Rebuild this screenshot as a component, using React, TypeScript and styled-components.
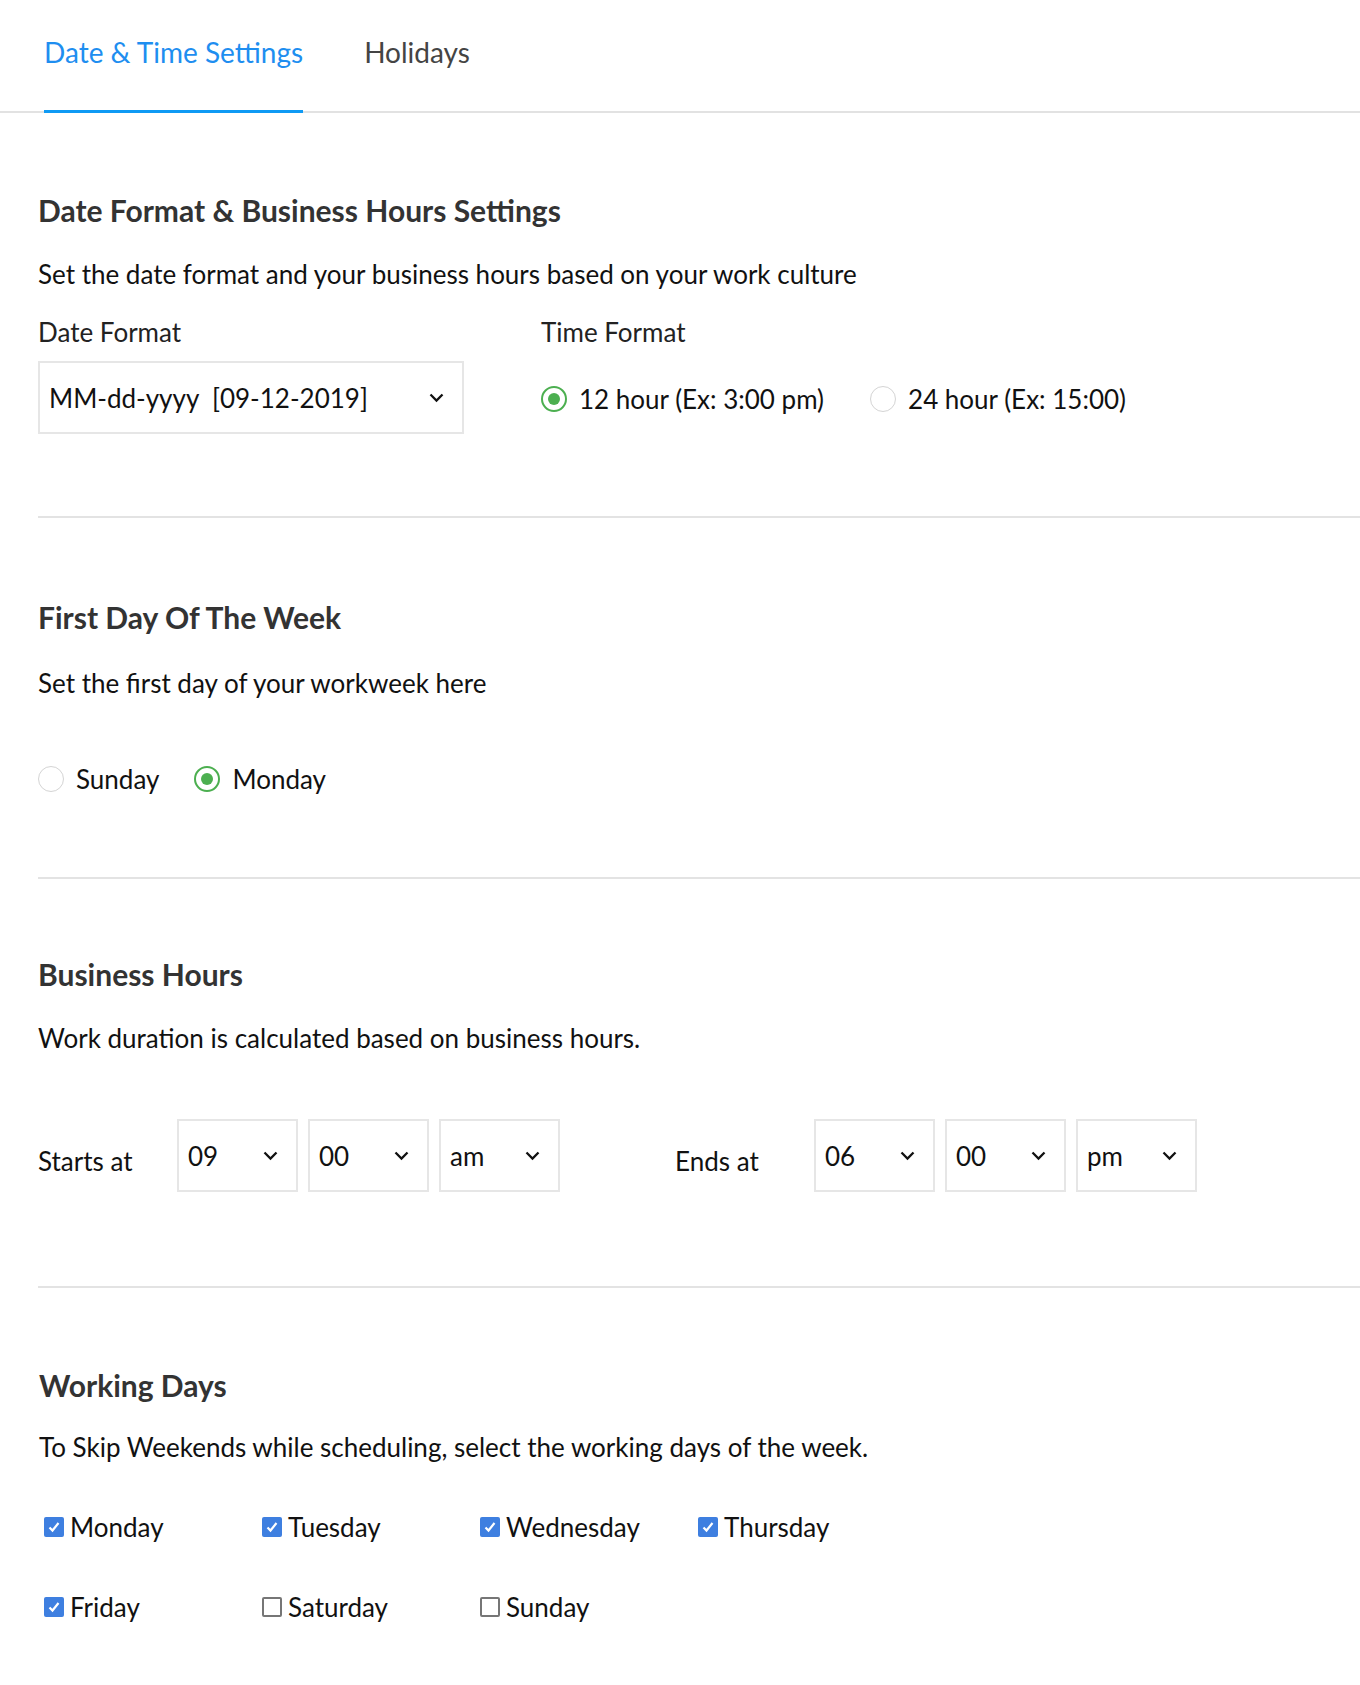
import React from "react";
import styled, { createGlobalStyle } from "styled-components";

const Global = createGlobalStyle`
  html, body { margin: 0; padding: 0; background: #fff; }
  body { font-family: Lato, "Open Sans", sans-serif; color: #111; }
  * { box-sizing: border-box; }
`;

const Page = styled.div`
  width: 1360px;
  min-height: 1685px;
  background: #fff;
`;

const TabBar = styled.div`
  display: flex;
  gap: 61px;
  padding-left: 44px;
  border-bottom: 2px solid #e2e2e2;
  height: 113px;
`;

const Tab = styled.div<{ $active?: boolean }>`
  font-size: 28px;
  line-height: 34px;
  padding-top: 35px;
  color: ${(p) => (p.$active ? "#1e8ef0" : "#444")};
  border-bottom: 3px solid ${(p) => (p.$active ? "#0f9af4" : "transparent")};
  margin-bottom: -2px;
  height: 113px;
`;

const Content = styled.div`
  padding-left: 38px;
`;

const Section = styled.section<{ $top: number; $bottom: number; $last?: boolean }>`
  padding-top: ${(p) => p.$top}px;
  padding-bottom: ${(p) => p.$bottom}px;
  border-bottom: ${(p) => (p.$last ? "none" : "2px solid #e3e3e3")};
`;

const Heading = styled.h2<{ $indent?: number }>`
  margin: 0;
  font-size: 30px;
  line-height: 36px;
  font-weight: 700;
  color: #333;
  padding-left: ${(p) => p.$indent || 0}px;
`;

const Desc = styled.p<{ $gap: number; $indent?: number }>`
  margin: ${(p) => p.$gap}px 0 0;
  font-size: 26px;
  line-height: 32px;
  color: #111;
  padding-left: ${(p) => p.$indent || 0}px;
`;

const FormatRow = styled.div`
  display: flex;
  gap: 77px;
  margin-top: 26px;
`;

const Field = styled.div`
  display: flex;
  flex-direction: column;
  gap: 13px;
`;

const Label = styled.div`
  font-size: 26px;
  line-height: 32px;
  color: #222;
`;

const SelectBox = styled.div<{ $w: number }>`
  width: ${(p) => p.$w}px;
  height: 73px;
  border: 2px solid #e6e6e6;
  display: flex;
  align-items: center;
  justify-content: space-between;
  padding: 0 18px 0 9px;
  font-size: 26px;
  color: #111;
  white-space: pre;
`;

const RadioGroup = styled.div<{ $gap: number; $top: number }>`
  display: flex;
  align-items: center;
  gap: ${(p) => p.$gap}px;
  margin-top: ${(p) => p.$top}px;
`;

const RadioItem = styled.label`
  display: flex;
  align-items: center;
  gap: 12px;
  font-size: 26px;
  line-height: 32px;
  color: #111;
`;

const RadioCircle = styled.span<{ $on?: boolean }>`
  width: 26px;
  height: 26px;
  border-radius: 50%;
  border: ${(p) => (p.$on ? "2px solid #4caf50" : "1.5px solid #d4d4d4")};
  display: flex;
  align-items: center;
  justify-content: center;
  &::after {
    content: "";
    width: 12px;
    height: 12px;
    border-radius: 50%;
    background: ${(p) => (p.$on ? "#4caf50" : "transparent")};
  }
`;

const TimeRow = styled.div`
  display: flex;
  align-items: center;
  margin-top: 65px;
`;

const TimeGroup = styled.div`
  display: flex;
  align-items: center;
  & + & {
    margin-left: 115px;
  }
`;

const TimeLabel = styled.div`
  width: 139px;
  font-size: 26px;
  line-height: 32px;
  color: #111;
  margin-top: 10px;
`;

const Selects = styled.div`
  display: flex;
  gap: 10px;
`;

const DaysGrid = styled.div`
  display: grid;
  grid-template-columns: repeat(4, 218px);
  row-gap: 48px;
  margin-top: 48px;
  padding-left: 6px;
`;

const DayItem = styled.label`
  display: flex;
  align-items: center;
  gap: 6px;
  font-size: 26px;
  line-height: 32px;
  color: #111;
`;

const Box = styled.span<{ $on?: boolean }>`
  width: 20px;
  height: 20px;
  border-radius: 2px;
  background: ${(p) => (p.$on ? "#3e7fe0" : "#fff")};
  border: ${(p) => (p.$on ? "none" : "2px solid #767676")};
  display: flex;
  align-items: center;
  justify-content: center;
`;

const Chevron = () => (
  <svg width="15" height="10" viewBox="0 0 15 10">
    <polyline points="1.5,1.5 7.5,7.5 13.5,1.5" fill="none" stroke="#111" strokeWidth="2.3" />
  </svg>
);

const Check = () => (
  <svg width="14" height="12" viewBox="0 0 14 12">
    <polyline points="2.5,6.5 5.5,9.5 11.5,2" fill="none" stroke="#fff" strokeWidth="2.2" />
  </svg>
);

const Select = ({ value, w }: { value: string; w: number }) => (
  <SelectBox $w={w}>
    <span>{value}</span>
    <Chevron />
  </SelectBox>
);

const Radio = ({ on, label }: { on?: boolean; label: string }) => (
  <RadioItem>
    <RadioCircle $on={on} />
    {label}
  </RadioItem>
);

const days: [string, boolean][] = [
  ["Monday", true],
  ["Tuesday", true],
  ["Wednesday", true],
  ["Thursday", true],
  ["Friday", true],
  ["Saturday", false],
  ["Sunday", false],
];

export default function App() {
  return (
    <Page>
      <Global />
      <TabBar>
        <Tab $active>Date &amp; Time Settings</Tab>
        <Tab>Holidays</Tab>
      </TabBar>
      <Content>
        <Section $top={79} $bottom={82}>
          <Heading>Date Format &amp; Business Hours Settings</Heading>
          <Desc $gap={30}>Set the date format and your business hours based on your work culture</Desc>
          <FormatRow>
            <Field>
              <Label>Date Format</Label>
              <Select value="MM-dd-yyyy  [09-12-2019]" w={426} />
            </Field>
            <Field>
              <Label>Time Format</Label>
              <RadioGroup $gap={46} $top={22}>
                <Radio on label="12 hour (Ex: 3:00 pm)" />
                <Radio label="24 hour (Ex: 15:00)" />
              </RadioGroup>
            </Field>
          </FormatRow>
        </Section>
        <Section $top={81} $bottom={82}>
          <Heading>First Day Of The Week</Heading>
          <Desc $gap={32}>Set the first day of your workweek here</Desc>
          <RadioGroup $gap={35} $top={64}>
            <Radio label="Sunday" />
            <Radio on label="Monday" />
          </RadioGroup>
        </Section>
        <Section $top={77} $bottom={94}>
          <Heading>Business Hours</Heading>
          <Desc $gap={30}>Work duration is calculated based on business hours.</Desc>
          <TimeRow>
            <TimeGroup>
              <TimeLabel>Starts at</TimeLabel>
              <Selects>
                <Select value="09" w={121} />
                <Select value="00" w={121} />
                <Select value="am" w={121} />
              </Selects>
            </TimeGroup>
            <TimeGroup>
              <TimeLabel>Ends at</TimeLabel>
              <Selects>
                <Select value="06" w={121} />
                <Select value="00" w={121} />
                <Select value="pm" w={121} />
              </Selects>
            </TimeGroup>
          </TimeRow>
        </Section>
        <Section $top={79} $bottom={60} $last>
          <Heading $indent={1}>Working Days</Heading>
          <Desc $gap={28} $indent={1}>
            To Skip Weekends while scheduling, select the working days of the week.
          </Desc>
          <DaysGrid>
            {days.map(([d, on]) => (
              <DayItem key={d}>
                <Box $on={on}>{on && <Check />}</Box>
                {d}
              </DayItem>
            ))}
          </DaysGrid>
        </Section>
      </Content>
    </Page>
  );
}
